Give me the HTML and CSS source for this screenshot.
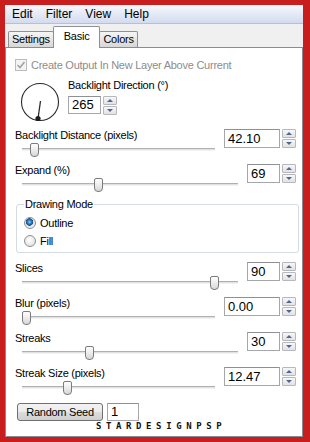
FILE: index.html
```html
<!DOCTYPE html>
<html lang="en">
<head>
    <meta charset="UTF-8">
    <title>Backlight - Basic</title>
    <link rel="stylesheet" href="styles.css">
</head>
<body>
    <div class="frame">
        <div class="window">
            <div class="menubar">
                <span>Edit</span>
                <span>Filter</span>
                <span>View</span>
                <span>Help</span>
            </div>

            <div class="tabs">
                <div class="tab">Settings</div>
                <div class="tab tab-active">Basic</div>
                <div class="tab">Colors</div>
            </div>

            <div class="panel">
                <!-- Opción deshabilitada -->
                <div class="check-row">
                    <span class="checkbox">
                        <svg width="10" height="10" viewBox="0 0 10 10"><path d="M1.5 5 L4 7.5 L8.5 2" fill="none" stroke="#a3a3a3" stroke-width="1.6"/></svg>
                    </span>
                    Create Output In New Layer Above Current
                </div>

                <!-- Dirección -->
                <div class="direction">
                    <svg class="dial" width="44" height="44" viewBox="0 0 44 44">
                        <circle cx="22" cy="22" r="18.5" fill="none" stroke="#2b2b2b" stroke-width="1.1"/>
                        <line x1="22.5" y1="21" x2="20" y2="38.5" stroke="#2b2b2b" stroke-width="1.3"/>
                        <circle cx="20" cy="38.5" r="2.6" fill="#1e1e1e"/>
                    </svg>
                    <div class="direction-ctrl">
                        <div class="field-label">Backlight Direction (°)</div>
                        <div class="spinner spinner-dir">
                            <div class="spin-box spin-sm">265</div>
                            <div class="spin-btns"><span class="spin-btn spin-up"></span><span class="spin-btn spin-down"></span></div>
                        </div>
                    </div>
                </div>

                <div class="field">
                    <div class="field-label">Backlight Distance (pixels)</div>
                    <div class="slider"><div class="track"></div><div class="thumb" style="left: 8px"></div></div>
                    <div class="spinner">
                        <div class="spin-box">42.10</div>
                        <div class="spin-btns"><span class="spin-btn spin-up"></span><span class="spin-btn spin-down"></span></div>
                    </div>
                </div>

                <div class="field">
                    <div class="field-label">Expand (%)</div>
                    <div class="slider"><div class="track"></div><div class="thumb" style="left: 72px"></div></div>
                    <div class="spinner">
                        <div class="spin-box spin-sm">69</div>
                        <div class="spin-btns"><span class="spin-btn spin-up"></span><span class="spin-btn spin-down"></span></div>
                    </div>
                </div>

                <!-- Modo de dibujo -->
                <div class="group">
                    <div class="group-title">Drawing Mode</div>
                    <div class="radio-row"><span class="radio radio-on"></span>Outline</div>
                    <div class="radio-row"><span class="radio"></span>Fill</div>
                </div>

                <div class="field field-after-group">
                    <div class="field-label">Slices</div>
                    <div class="slider"><div class="track"></div><div class="thumb" style="left: 188px"></div></div>
                    <div class="spinner">
                        <div class="spin-box spin-sm">90</div>
                        <div class="spin-btns"><span class="spin-btn spin-up"></span><span class="spin-btn spin-down"></span></div>
                    </div>
                </div>

                <div class="field">
                    <div class="field-label">Blur (pixels)</div>
                    <div class="slider"><div class="track"></div><div class="thumb" style="left: 0px"></div></div>
                    <div class="spinner">
                        <div class="spin-box">0.00</div>
                        <div class="spin-btns"><span class="spin-btn spin-up"></span><span class="spin-btn spin-down"></span></div>
                    </div>
                </div>

                <div class="field">
                    <div class="field-label">Streaks</div>
                    <div class="slider"><div class="track"></div><div class="thumb" style="left: 63px"></div></div>
                    <div class="spinner">
                        <div class="spin-box spin-sm">30</div>
                        <div class="spin-btns"><span class="spin-btn spin-up"></span><span class="spin-btn spin-down"></span></div>
                    </div>
                </div>

                <div class="field">
                    <div class="field-label">Streak Size (pixels)</div>
                    <div class="slider"><div class="track"></div><div class="thumb" style="left: 41px"></div></div>
                    <div class="spinner">
                        <div class="spin-box">12.47</div>
                        <div class="spin-btns"><span class="spin-btn spin-up"></span><span class="spin-btn spin-down"></span></div>
                    </div>
                </div>

                <div class="seed-row">
                    <button class="seed-btn">Random Seed</button>
                    <div class="seed-input">1</div>
                </div>

                <div class="watermark">STARDESIGNPSP</div>
            </div>
        </div>
    </div>
</body>
</html>
```

FILE: styles.css
```css
* {
    box-sizing: border-box;
}

body {
    margin: 0;
    font-family: 'Liberation Sans', Arial, sans-serif;
    font-size: 11px;
    letter-spacing: -0.25px;
    color: #000;
}

.frame {
    width: 310px;
    height: 442px;
    background: #c81e1e;
    padding: 5px 7px 5px 5px;
}

.window {
    height: 100%;
    display: flex;
    flex-direction: column;
    background: #f0f0f0;
}

/* Barra de menú */
.menubar {
    flex: none;
    height: 19px;
    display: flex;
    gap: 13px;
    padding-left: 7px;
    line-height: 18px;
    font-size: 12px;
    letter-spacing: 0;
    background: linear-gradient(#f6f8fd, #e3e8f5 55%, #d4dbef);
    border-bottom: 1px solid #b9c0d3;
}

/* Pestañas */
.tabs {
    flex: none;
    height: 23px;
    display: flex;
    align-items: flex-end;
    padding-left: 3px;
}
.tab {
    height: 16px;
    padding: 0 3px;
    margin-right: -1px;
    line-height: 15px;
    border: 1px solid #8e9097;
    border-bottom: none;
    border-radius: 2px 2px 0 0;
    background: linear-gradient(#f5f5f5, #e6e6e6 50%, #d7d7d7);
}
.tab-active {
    position: relative;
    z-index: 1;
    height: 22px;
    margin-bottom: -1px;
    padding: 0 10px;
    line-height: 18px;
    background: #fff;
}

.panel {
    flex: 1;
    background: #fff;
    border: 1px solid #898c95;
    overflow: hidden;
}

/* Casilla */
.check-row {
    display: flex;
    align-items: center;
    gap: 4px;
    height: 14px;
    margin-top: 10px;
    padding-left: 9px;
    color: #8d8d8d;
}
.checkbox {
    width: 12px;
    height: 12px;
    display: flex;
    align-items: center;
    justify-content: center;
    border: 1px solid #bcbcbc;
    background: #f4f4f4;
}

.direction {
    display: flex;
    margin-top: 6px;
}
.dial {
    margin: 2px 0 0 12px;
}
.direction-ctrl {
    margin-left: 6px;
}
.spinner-dir {
    margin-top: 4px;
}

.field-label {
    height: 14px;
    line-height: 14px;
    white-space: nowrap;
}

/* Fila de control deslizante */
.field {
    display: grid;
    grid-template-columns: 1fr auto;
    grid-template-rows: 14px 16px;
    column-gap: 9px;
    height: 35px;
    padding: 0 6px 0 9px;
}
.direction + .field {
    margin-top: 4px;
}
.field-after-group {
    margin-top: 8px;
}
.field .field-label {
    grid-column: 1;
    grid-row: 1;
}
.slider {
    grid-column: 1;
    grid-row: 2;
    position: relative;
    margin-left: 7px;
}
.track {
    position: absolute;
    left: 0;
    right: 0;
    top: 6px;
    height: 3px;
    border-top: 1px solid #b0b0b0;
    border-bottom: 1px solid #f2f2f2;
    background: #e2e2e2;
}
.thumb {
    position: absolute;
    top: 1px;
    width: 9px;
    height: 14px;
    border: 1px solid #7c7c7c;
    border-radius: 2px 2px 4px 4px;
    background: linear-gradient(#fefefe, #ececec 50%, #d6d6d6);
}

/* Control numérico */
.spinner {
    display: flex;
    gap: 2px;
    align-items: flex-start;
}
.field .spinner {
    grid-column: 2;
    grid-row: 1 / span 2;
    margin-top: 1px;
}
.spin-box {
    width: 56px;
    height: 19px;
    padding-left: 3px;
    font-size: 13px;
    letter-spacing: 0;
    line-height: 17px;
    border: 1px solid #a5a7ad;
    border-top-color: #8e9096;
    background: #fff;
}
.spin-sm {
    width: 33px;
}
.spinner-dir .spin-box {
    height: 18px;
    line-height: 16px;
}
.spin-btns {
    display: flex;
    flex-direction: column;
    gap: 1px;
}
.spin-btn {
    width: 14px;
    height: 9px;
    display: flex;
    align-items: center;
    justify-content: center;
    border: 1px solid #b6b8bd;
    border-radius: 1px;
    background: linear-gradient(#f7f7f7, #e2e2e2);
}
.spin-btn::before {
    content: '';
    border-left: 3px solid transparent;
    border-right: 3px solid transparent;
}
.spin-up::before {
    border-bottom: 3px solid #4e6790;
}
.spin-down::before {
    border-top: 3px solid #4e6790;
}

/* Grupo */
.group {
    position: relative;
    margin: 6px 3px 0 10px;
    padding: 11px 0 4px 7px;
    border: 1px solid #d3dce3;
    border-radius: 3px;
    display: flex;
    flex-direction: column;
    gap: 4px;
}
.group-title {
    position: absolute;
    top: -8px;
    left: 7px;
    padding: 0 1px;
    background: #fff;
    line-height: 14px;
}
.radio-row {
    display: flex;
    align-items: center;
    gap: 4px;
    height: 14px;
}
.radio {
    width: 12px;
    height: 12px;
    border-radius: 50%;
    border: 1px solid #8d8f93;
    background: radial-gradient(circle at 45% 40%, #ffffff, #d9d9d9);
}
.radio-on {
    background: radial-gradient(circle at 45% 40%, #8fd0f5 0, #2b7cc2 2px, #17528c 3.5px, #e6e6e6 4px, #fbfbfb 100%);
}

/* Semilla */
.seed-row {
    display: flex;
    gap: 4px;
    margin-top: 2px;
    padding-left: 11px;
}
.seed-btn {
    width: 86px;
    height: 18px;
    padding: 0;
    font-family: inherit;
    font-size: 11px;
    letter-spacing: -0.25px;
    color: #000;
    border: 1px solid #707070;
    border-radius: 3px;
    background: linear-gradient(#f3f3f3, #ebebeb 50%, #dddddd 51%, #cfcfcf);
}
.seed-input {
    width: 32px;
    height: 18px;
    padding-left: 3px;
    font-size: 13px;
    letter-spacing: 0;
    line-height: 16px;
    border: 1px solid #a5a7ad;
    border-top-color: #8e9096;
}

.watermark {
    margin-top: 1px;
    padding-left: 90px;
    height: 8px;
    line-height: 8px;
    font-family: 'DejaVu Sans Mono', monospace;
    font-weight: bold;
    font-size: 9px;
    letter-spacing: 4.6px;
    color: #111;
}
```
